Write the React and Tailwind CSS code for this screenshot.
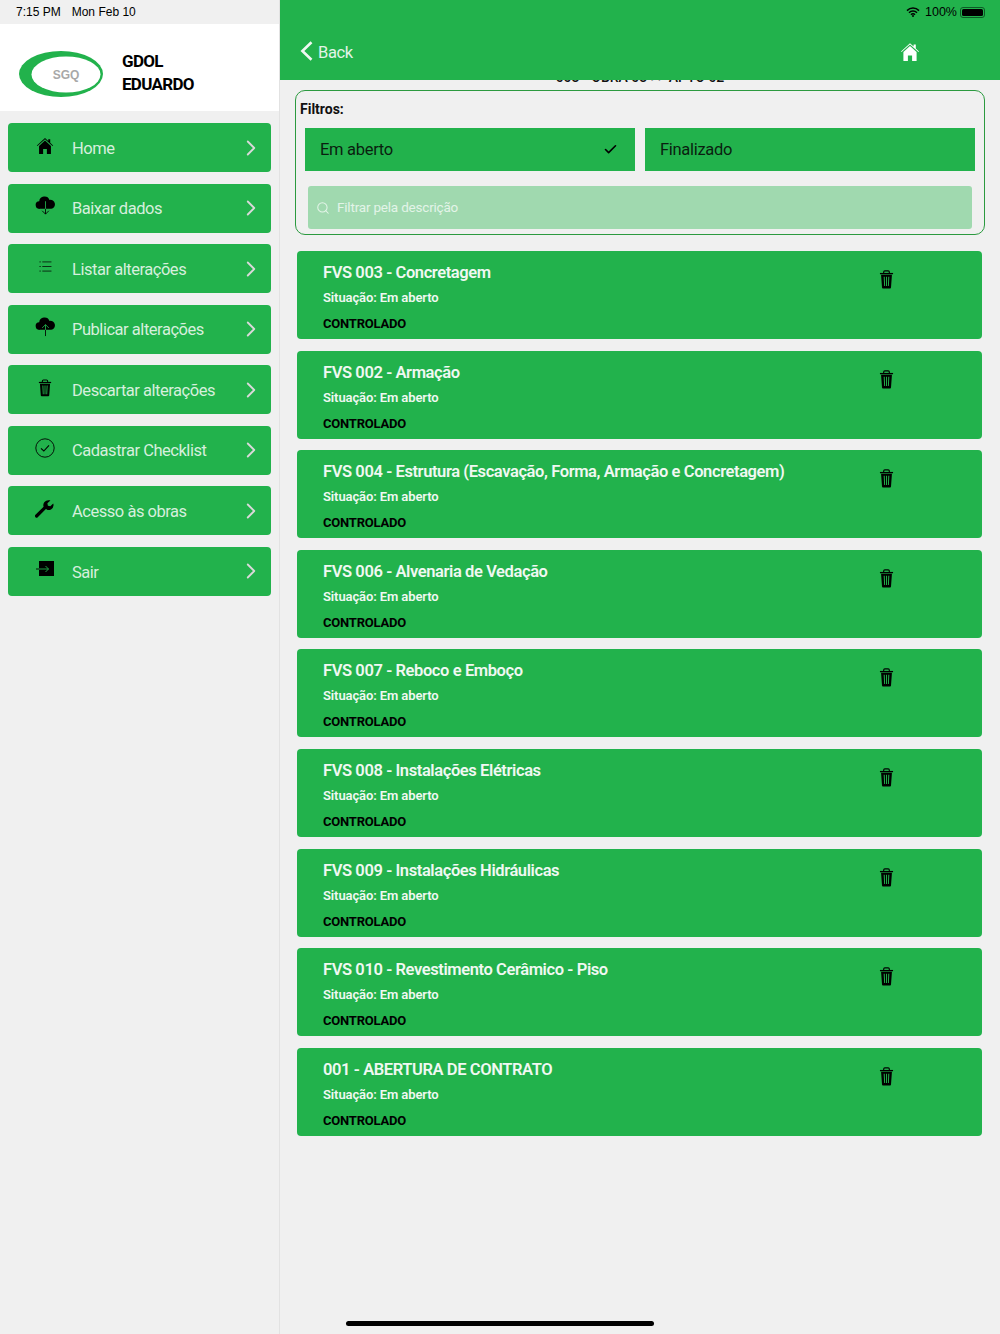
import React from 'react';
import { ChevronRight, Check, Search } from 'lucide-react';

const font = "font-['Roboto',sans-serif]";

function TrashIcon({ className }) {
  return (
    <svg viewBox="0 0 16 20" className={className}>
      <path d="M5 3V2a1.2 1.2 0 0 1 1.2-1.2h3.6A1.2 1.2 0 0 1 11 2v1" fill="none" stroke="#000" strokeWidth="1.2" />
      <path d="M1 3h14v1.4H1z" fill="#000" />
      <path fillRule="evenodd" fill="#000" d="M2.2 5h11.6l-1 13.6a1 1 0 0 1-1 .9H4.2a1 1 0 0 1-1-.9zM5 7l.5 10h1L6.1 7zm2.5 0v10h1V7zm2.4 0-.4 10h1l.5-10z" />
    </svg>
  );
}

function HomeIcon({ fill = '#000', className }) {
  return (
    <svg viewBox="0 0 20 20" className={className}>
      <path d="M10 1.2 1 9.4l.6.7L10 2.5l8.4 7.6.6-.7-3.2-2.9V2.6h-2.2v1.8z" fill={fill} />
      <path d="M10 4 3.4 10v9h4.5v-5.6h4.2V19h4.5v-9z" fill={fill} />
    </svg>
  );
}

function CloudIcon({ up }) {
  return (
    <svg viewBox="0 0 22 20" className="w-[21px] h-[20px]">
      <path d="M5 14a4 4 0 0 1-.6-8A5.6 5.6 0 0 1 15.2 4.6 4.7 4.7 0 0 1 17 14z" fill="#000" transform="translate(0 -1)" />
      {up ? (
        <path d="M11 19V7.5M7.5 11 11 7.5l3.5 3.5" fill="none" stroke="#22b24c" strokeWidth="0.9" />
      ) : (
        <path d="M11 5v13.5M7.5 15l3.5 3.5 3.5-3.5" fill="none" stroke="#22b24c" strokeWidth="0.9" />
      )}
      {up ? (
        <path d="M11 13v6.5" stroke="#000" strokeWidth="0.9" />
      ) : (
        <path d="M11 13v5.5M7.5 15l3.5 3.5 3.5-3.5" fill="none" stroke="#000" strokeWidth="0.9" />
      )}
    </svg>
  );
}

function ListIcon() {
  return (
    <svg viewBox="0 0 14 12" className="w-[13px] h-[11px]">
      <path d="M3.5 1h10M3.5 6h10M3.5 11h10" stroke="#000" strokeWidth="0.8" />
      <path d="M0.5 1h1.2M0.5 6h1.2M0.5 11h1.2" stroke="#000" strokeWidth="1" />
    </svg>
  );
}

function CheckCircleIcon() {
  return (
    <svg viewBox="0 0 20 20" className="w-[20px] h-[20px]">
      <circle cx="10" cy="10" r="9.2" fill="none" stroke="#000" strokeWidth="0.9" />
      <path d="m6 10.4 2.8 2.6L14 7.4" fill="none" stroke="#000" strokeWidth="1.1" />
    </svg>
  );
}

function WrenchIcon() {
  return (
    <svg viewBox="0 0 20 20" className="w-[20px] h-[20px]">
      <path d="M1.6 17 10 8.6" stroke="#000" strokeWidth="3.2" strokeLinecap="round" />
      <path d="M8.5 7.5a5 5 0 0 1 5.3-6.3c.6 0 1.2.2 1.6.4l-3 2.7.5 2.4 2.4.6 2.9-2.8c.3.6.4 1.3.3 2a5 5 0 0 1-6.5 4.3z" fill="#000" />
    </svg>
  );
}

function ExitIcon() {
  return (
    <svg viewBox="0 0 18 16" className="w-[18px] h-[16px]">
      <path d="M3 0h15v15H3z" fill="#000" />
      <path d="M0 8h12.5M9.5 5l3 3-3 3" fill="none" stroke="#22b24c" strokeWidth="0.9" />
      <path d="M0 8h3" stroke="#000" strokeWidth="0.9" />
    </svg>
  );
}

const menu = [
  { label: 'Home', icon: <HomeIcon className="w-[18px] h-[18px]" /> },
  { label: 'Baixar dados', icon: <CloudIcon /> },
  { label: 'Listar alterações', icon: <ListIcon /> },
  { label: 'Publicar alterações', icon: <CloudIcon up /> },
  { label: 'Descartar alterações', icon: <TrashIcon className="w-[14px] h-[18px]" /> },
  { label: 'Cadastrar Checklist', icon: <CheckCircleIcon /> },
  { label: 'Acesso às obras', icon: <WrenchIcon /> },
  { label: 'Sair', icon: <ExitIcon /> },
];

const items = [
  'FVS 003 - Concretagem',
  'FVS 002 - Armação',
  'FVS 004 - Estrutura (Escavação, Forma, Armação e Concretagem)',
  'FVS 006 - Alvenaria de Vedação',
  'FVS 007 - Reboco e Emboço',
  'FVS 008 - Instalações Elétricas',
  'FVS 009 - Instalações Hidráulicas',
  'FVS 010 - Revestimento Cerâmico - Piso',
  '001 - ABERTURA DE CONTRATO',
];

function Sidebar() {
  return (
    <div className="w-[280px] shrink-0 border-r border-[#e2e2e2] flex flex-col">
      <div className="h-6 flex items-center pl-4 gap-[11px] text-[12px] text-black font-['Liberation_Sans',sans-serif]">
        <span>7:15 PM</span>
        <span>Mon Feb 10</span>
      </div>
      <div className="h-[87px] bg-white flex items-center pl-[19px]">
        <svg viewBox="0 0 84 46" className="w-[84px] h-[46px] mt-[13px]">
          <ellipse cx="42" cy="23" rx="42" ry="23" fill="#22b24c" />
          <ellipse cx="47" cy="23.5" rx="34.5" ry="18" fill="#fff" />
          <text x="47" y="28" textAnchor="middle" fontSize="12" fontWeight="700" fill="#a8a8a8" fontFamily="Liberation Sans">SGQ</text>
        </svg>
        <div className="ml-[19px] mt-[10px] text-[17px] leading-[23px] font-bold text-black tracking-[-0.7px]">
          <div>GDOL</div>
          <div>EDUARDO</div>
        </div>
      </div>
      <div className="pt-3 px-2 flex flex-col gap-[11.57px]">
        {menu.map((m) => (
          <div key={m.label} className="h-[49px] bg-[#22b24c] rounded-[4px] flex items-center text-[#d6efdd]">
            <div className="w-[74px] h-[24px] -translate-y-[2px] flex items-center justify-center">{m.icon}</div>
            <span className="-ml-[10px] mt-[3px] flex-1 text-[16.5px] tracking-[-0.47px]">{m.label}</span>
            <ChevronRight size={26} strokeWidth={1.7} className="mr-[7px] text-[#d9d9d9]" />
          </div>
        ))}
      </div>
    </div>
  );
}

function Card({ title }) {
  return (
    <div className="h-[88px] bg-[#22b24c] rounded-[4px] flex pl-[26px]">
      <div className="flex-1 whitespace-nowrap">
        <div className="mt-[10px] text-[16.5px] leading-6 font-semibold text-[#f0f8f2] tracking-[-0.4px]">{title}</div>
        <div className="mt-[4px] text-[13px] leading-[18px] font-semibold text-[#f0f8f2] tracking-[-0.1px]">Situação: Em aberto</div>
        <div className="mt-[8px] text-[13px] leading-[18px] font-bold text-black tracking-[-0.2px]">CONTROLADO</div>
      </div>
      <div className="w-[103px] shrink-0 pt-[19px]">
        <TrashIcon className="w-[15px] h-[19px]" />
      </div>
    </div>
  );
}

export default function App() {
  return (
    <div className={`relative w-[1000px] h-[1334px] overflow-hidden bg-[#f0f0f0] flex ${font}`}>
      <Sidebar />
      <div className="flex-1 flex flex-col">
        <div className="h-20 bg-[#22b24c] flex flex-col">
          <div className="h-6 flex items-center justify-end pr-[15px] gap-[3px] text-[12.5px] text-black font-['Liberation_Sans',sans-serif]">
            <svg viewBox="0 0 14 10" className="w-[14px] h-[10px] mr-[2px]">
              <path d="M1 3.6a8.5 8.5 0 0 1 12 0M3 5.7a5.6 5.6 0 0 1 8 0M5 7.7a2.8 2.8 0 0 1 4 0" fill="none" stroke="#000" strokeWidth="1.5" />
              <circle cx="7" cy="9" r="1" fill="#000" />
            </svg>
            <span>100%</span>
            <div className="w-[25px] h-[11px] border border-[#0d5a26] rounded-[3px] p-[1px]">
              <div className="w-full h-full bg-black rounded-[1.5px]" />
            </div>
          </div>
          <div className="h-14 flex items-center justify-between pl-[20px] pr-[80px] pb-[1px]">
            <div className="flex items-center text-[#e3f4e8] text-[16.5px] tracking-[-0.4px]">
              <svg viewBox="0 0 13 20" className="w-[13px] h-[20px] -mt-[2px]">
                <path d="M11.5 1.2 2.4 10l9.1 8.8" fill="none" stroke="#f0f8f2" strokeWidth="2.6" />
              </svg>
              <span className="ml-[5px] mt-[4px]">Back</span>
            </div>
            <HomeIcon fill="#fff" className="w-[20px] h-[20px]" />
          </div>
        </div>
        <div className="h-[4px] overflow-hidden text-center">
          <div className="-mt-[11.5px] text-[14px] leading-4 font-medium text-[#111]">003 - OBRA 03 &gt;&gt; APTO 02</div>
        </div>
        <div className="mt-[6px] mx-[15px] h-[145px] border border-[#2b9a3f] rounded-[10px] pl-[4px] pr-[9px]">
          <div className="pt-[9px] h-[37px] text-[14px] leading-[18px] font-bold text-[#111]">Filtros:</div>
          <div className="flex gap-[10px] pl-[5px]">
            <div className="w-[330px] h-[43px] bg-[#22b24c] flex items-center justify-between pl-[15px] pr-[17px] text-[16.5px] text-[#0a1f10] tracking-[-0.3px]">
              <span className="mt-[2px]">Em aberto</span>
              <Check size={15} strokeWidth={2.6} className="text-black" />
            </div>
            <div className="w-[330px] h-[43px] bg-[#22b24c] flex items-center pl-[15px] text-[16.5px] text-[#0a1f10] tracking-[-0.3px]">
              <span className="mt-[2px]">Finalizado</span>
            </div>
          </div>
          <div className="mt-[15px] ml-[8px] mr-[3px] h-[43px] bg-[#a0d9af] rounded-[3px] flex items-center pl-[8px] gap-[7px] text-[13.5px] tracking-[-0.2px] text-[#e3f4e8]">
            <Search size={14} strokeWidth={1.8} />
            <span>Filtrar pela descrição</span>
          </div>
        </div>
        <div className="mt-[16px] ml-[17px] mr-[18px] flex flex-col gap-[11.6px]">
          {items.map((t) => (
            <Card key={t} title={t} />
          ))}
        </div>
      </div>
      <div className="absolute left-[346px] top-[1321px] w-[308px] h-[5px] rounded-full bg-black" />
    </div>
  );
}
